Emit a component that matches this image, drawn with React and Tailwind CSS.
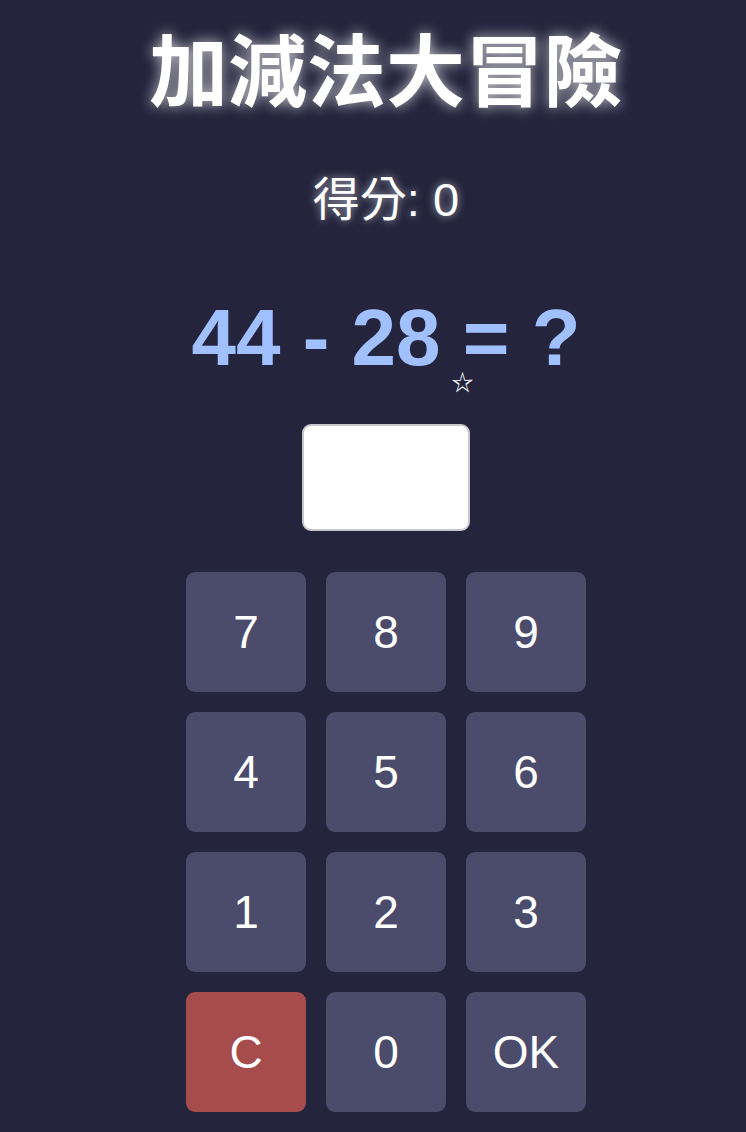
import React, { useState } from 'react';

const KEYS = ['7', '8', '9', '4', '5', '6', '1', '2', '3', 'C', '0', 'OK'];

const App = () => {
    const [answer, setAnswer] = useState('');
    const [score] = useState(0);

    const press = (k) => {
        if (k === 'C') setAnswer('');
        else if (k === 'OK') return;
        else setAnswer((a) => (a + k).slice(0, 3));
    };

    return (
        <div className="min-h-screen bg-[#24243d] pl-[26px] font-['Liberation_Sans','Noto_Sans_CJK_TC',sans-serif]">
            <div className="flex flex-col items-center pt-[26px]">
                {/* Title */}
                <h1 className="text-[79px] leading-[96px] font-bold text-white [text-shadow:0_0_14px_rgba(255,255,255,0.75)]">
                    加減法大冒險
                </h1>

                {/* Score */}
                <p className="mt-[50px] text-[47px] leading-[56px] text-white [text-shadow:0_0_8px_rgba(255,255,255,0.6)]">
                    得分: {score}
                </p>

                {/* Question */}
                <div className="relative mt-[64px]">
                    <p className="text-[80px] leading-[92px] font-bold text-[#a0c0ff]">44 - 28 = ?</p>
                    <span className="absolute left-[260px] top-[80px] text-[22px] leading-none text-white">☆</span>
                </div>

                {/* Answer box */}
                <div className="mt-[40px] h-[107px] w-[168px] rounded-[9px] border-2 border-[#c8c8cc] bg-white flex items-center justify-center text-[48px] text-[#24243d]">
                    {answer}
                </div>

                {/* Keypad */}
                <div className="mt-[41px] grid grid-cols-3 gap-[20px]">
                    {KEYS.map((k) => (
                        <button
                            key={k}
                            onClick={() => press(k)}
                            className={`h-[120px] w-[120px] rounded-[9px] flex items-center justify-center text-[46px] text-white ${
                                k === 'C' ? 'bg-[#a64c4c]' : 'bg-[#4b4b6b]'
                            }`}
                        >
                            {k}
                        </button>
                    ))}
                </div>
            </div>
        </div>
    );
};

export default App;
